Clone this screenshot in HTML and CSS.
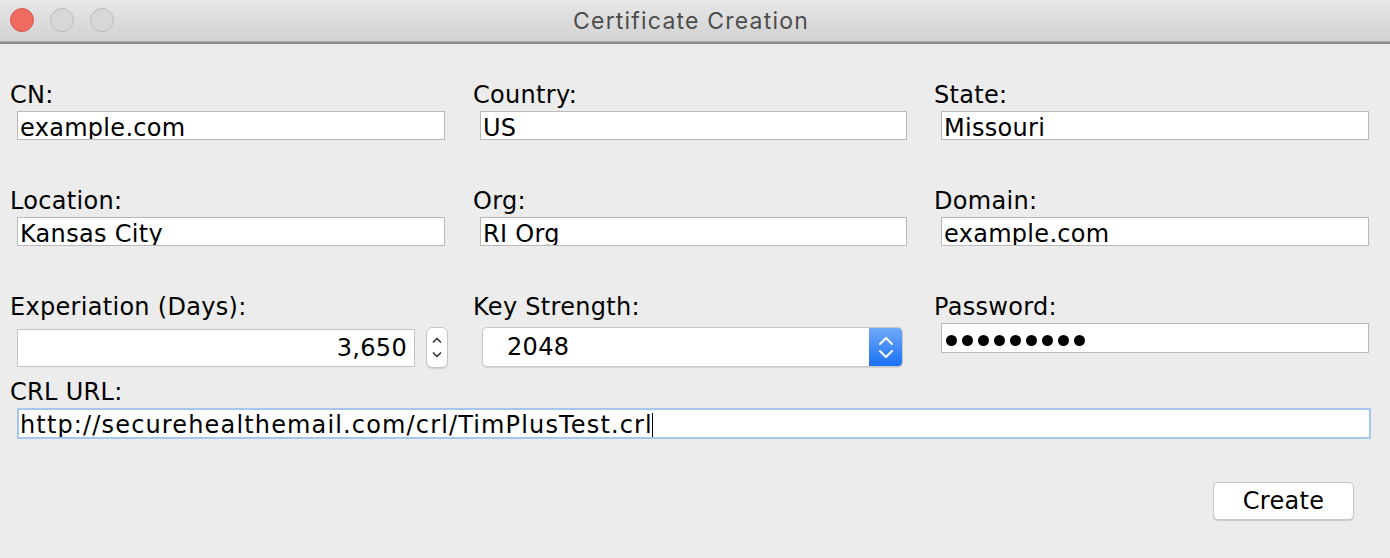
FILE: index.html
```html
<!DOCTYPE html>
<html lang="en">
<head>
<meta charset="utf-8">
<title>Certificate Creation</title>
<link rel="stylesheet" href="styles.css">
</head>
<body>
<div class="window">
  <div class="titlebar">
    <div class="lights">
      <span class="light red"></span>
      <span class="light gray"></span>
      <span class="light gray"></span>
    </div>
    <div class="title">Certificate Creation</div>
  </div>
  <div class="rule"></div>
  <div class="content">
    <div class="grid">
      <div class="cell">
        <div class="label">CN:</div>
        <div class="field">example.com</div>
      </div>
      <div class="cell">
        <div class="label">Country:</div>
        <div class="field narrow">US</div>
      </div>
      <div class="cell">
        <div class="label">State:</div>
        <div class="field">Missouri</div>
      </div>

      <div class="cell">
        <div class="label">Location:</div>
        <div class="field">Kansas City</div>
      </div>
      <div class="cell">
        <div class="label">Org:</div>
        <div class="field narrow">RI Org</div>
      </div>
      <div class="cell">
        <div class="label">Domain:</div>
        <div class="field">example.com</div>
      </div>

      <div class="cell">
        <div class="label">Experiation (Days):</div>
        <div class="spin-row">
          <div class="spin-field">3,650</div>
          <div class="spin-btn">
            <svg width="22" height="41" viewBox="0 0 22 41"><polyline points="7.5,15 11,11.5 14.5,15" fill="none" stroke="#3a3a3a" stroke-width="1.7" stroke-linecap="round" stroke-linejoin="round"/><polyline points="7.5,26 11,29.5 14.5,26" fill="none" stroke="#3a3a3a" stroke-width="1.7" stroke-linecap="round" stroke-linejoin="round"/></svg>
          </div>
        </div>
      </div>
      <div class="cell">
        <div class="label">Key Strength:</div>
        <div class="combo">
          <div class="combo-value">2048</div>
          <div class="combo-arrows">
            <svg width="33" height="40" viewBox="0 0 33 40"><polyline points="11,17 17,11 23,17" fill="none" stroke="#fff" stroke-width="2" stroke-linecap="round" stroke-linejoin="round"/><polyline points="11,24 17,30 23,24" fill="none" stroke="#fff" stroke-width="2" stroke-linecap="round" stroke-linejoin="round"/></svg>
          </div>
        </div>
      </div>
      <div class="cell">
        <div class="label">Password:</div>
        <div class="field password"><span class="dot"></span><span class="dot"></span><span class="dot"></span><span class="dot"></span><span class="dot"></span><span class="dot"></span><span class="dot"></span><span class="dot"></span><span class="dot"></span></div>
      </div>
    </div>

    <div class="crl">
      <div class="label">CRL URL:</div>
      <div class="field wide">http://securehealthemail.com/crl/TimPlusTest.crl<span class="caret"></span></div>
    </div>

    <div class="actions">
      <div class="button">Create</div>
    </div>
  </div>
</div>
</body>
</html>
```
FILE: styles.css
```css
html, body {
  margin: 0;
  padding: 0;
  background: #ececec;
}

.window {
  width: 1390px;
  height: 558px;
  background: #ececec;
  font-family: "DejaVu Sans", "Verdana", sans-serif;
  color: #000;
  overflow: hidden;
}

.titlebar {
  position: relative;
  height: 41px;
  background: linear-gradient(#e8e7e8, #d3d2d3);
  display: flex;
  align-items: center;
  justify-content: center;
}

.lights {
  position: absolute;
  left: 10px;
  top: 8px;
  display: flex;
  gap: 16px;
}

.light {
  width: 24px;
  height: 24px;
  border-radius: 50%;
  box-sizing: border-box;
}

.light.red {
  background: #ee6b60;
  border: 1px solid #d5554b;
}

.light.gray {
  background: #d8d7d8;
  border: 1px solid #bdbcbd;
}

.title {
  font-family: "Inter", "Liberation Sans", sans-serif;
  font-size: 23px;
  letter-spacing: 1.2px;
  line-height: 41px;
  color: #4d4d4d;
  margin-left: -8px;
  padding-top: 1px;
}

.rule {
  height: 3px;
  background: linear-gradient(#afafaf 0, #afafaf 1px, #8a8a8a 1px, #8a8a8a 3px);
}

.content {
  padding: 37px 0 0 10px;
}

.grid {
  display: grid;
  grid-template-columns: 463px 461px 1fr;
  row-gap: 47px;
}

.cell {
  display: flex;
  flex-direction: column;
}

.label {
  font-size: 24px;
  line-height: 28px;
  height: 28px;
  letter-spacing: 0.3px;
  white-space: nowrap;
}

.field {
  margin-top: 2px;
  margin-left: 7px;
  width: 428px;
  height: 29px;
  box-sizing: border-box;
  background: #fff;
  border: 1px solid #b9b9b9;
  padding: 2px 0 0 2px;
  font-size: 24px;
  line-height: 28px;
  letter-spacing: 0.3px;
  white-space: nowrap;
  overflow: hidden;
}

.field.narrow {
  width: 427px;
}

.field.password {
  height: 30px;
  padding: 11px 0 0 4px;
  display: flex;
  gap: 5px;
  align-items: flex-start;
}

.dot {
  width: 11px;
  height: 11px;
  border-radius: 50%;
  background: #000;
  flex: none;
}

.spin-row {
  margin-top: 2px;
  height: 47px;
  display: flex;
  align-items: flex-start;
}

.spin-field {
  margin-top: 6px;
  margin-left: 7px;
  width: 398px;
  height: 38px;
  box-sizing: border-box;
  background: #fff;
  border: 1px solid #c2c2c2;
  padding: 4px 7px 0 0;
  text-align: right;
  font-size: 24px;
  line-height: 28px;
  letter-spacing: 0.3px;
}

.spin-btn {
  margin-top: 4px;
  margin-left: 11px;
  width: 22px;
  height: 41px;
  box-sizing: border-box;
  background: #fff;
  border: 1px solid #c4c4c4;
  border-radius: 6px;
  box-shadow: 0 1px 1px rgba(0, 0, 0, 0.12);
  display: flex;
  align-items: center;
  justify-content: center;
}

.spin-btn svg {
  flex: none;
}

.combo {
  margin-top: 6px;
  margin-left: 9px;
  width: 421px;
  height: 40px;
  box-sizing: border-box;
  background: #fff;
  border: 1px solid #c9c9c9;
  border-radius: 5px;
  box-shadow: 0 1px 1px rgba(0, 0, 0, 0.12);
  display: flex;
  overflow: hidden;
}

.combo-value {
  flex: 1;
  padding-left: 24px;
  font-size: 24px;
  line-height: 38px;
  letter-spacing: 0.3px;
}

.combo-arrows {
  width: 33px;
  height: 38px;
  background: linear-gradient(#6fa9f8, #1a70f6);
  display: flex;
  align-items: center;
  justify-content: center;
}

.crl {
  margin-top: 8px;
  display: flex;
  flex-direction: column;
}

.field.wide {
  width: 1354px;
  height: 31px;
  border: 2px solid #a5c6ef;
  padding: 1px 0 0 1px;
  letter-spacing: 1.15px;
  line-height: 28px;
}

.caret {
  display: inline-block;
  width: 1px;
  height: 24px;
  background: #000;
  vertical-align: -4px;
  margin-left: -1px;
}

.actions {
  margin-top: 43px;
  display: flex;
  justify-content: flex-end;
  padding-right: 36px;
}

.button {
  width: 141px;
  height: 38px;
  box-sizing: border-box;
  background: #fff;
  border: 1px solid #c6c6c6;
  border-radius: 5px;
  box-shadow: 0 1px 1px rgba(0, 0, 0, 0.15);
  text-align: center;
  font-size: 24px;
  line-height: 36px;
  letter-spacing: 0.3px;
}
```
